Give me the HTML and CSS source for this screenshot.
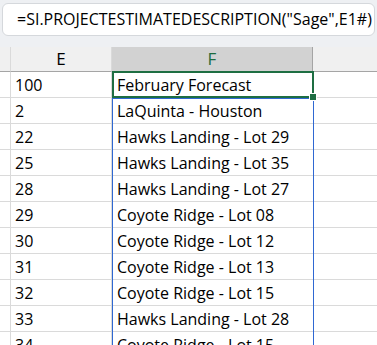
FILE: index.html
```html
<!DOCTYPE html>
<html lang="en">
<head>
  <meta charset="UTF-8" />
  <title>Sheet</title>
  <link rel="stylesheet" href="styles.css">
</head>
<body>
  <div class="formula-bar">
    <div class="formula">=SI.PROJECTESTIMATEDESCRIPTION("Sage",E1#)</div>
  </div>

  <div class="sheet">
    <div class="row head">
      <div class="edge"></div>
      <div class="cell e">E</div>
      <div class="cell f active-col">F</div>
      <div class="cell rest"></div>
    </div>
    <div class="row"><div class="edge"></div><div class="cell e">100</div><div class="cell f">February Forecast</div><div class="cell rest"></div></div>
    <div class="row"><div class="edge"></div><div class="cell e">2</div><div class="cell f">LaQuinta - Houston</div><div class="cell rest"></div></div>
    <div class="row"><div class="edge"></div><div class="cell e">22</div><div class="cell f">Hawks Landing - Lot 29</div><div class="cell rest"></div></div>
    <div class="row"><div class="edge"></div><div class="cell e">25</div><div class="cell f">Hawks Landing - Lot 35</div><div class="cell rest"></div></div>
    <div class="row"><div class="edge"></div><div class="cell e">28</div><div class="cell f">Hawks Landing - Lot 27</div><div class="cell rest"></div></div>
    <div class="row"><div class="edge"></div><div class="cell e">29</div><div class="cell f">Coyote Ridge - Lot 08</div><div class="cell rest"></div></div>
    <div class="row"><div class="edge"></div><div class="cell e">30</div><div class="cell f">Coyote Ridge - Lot 12</div><div class="cell rest"></div></div>
    <div class="row"><div class="edge"></div><div class="cell e">31</div><div class="cell f">Coyote Ridge - Lot 13</div><div class="cell rest"></div></div>
    <div class="row"><div class="edge"></div><div class="cell e">32</div><div class="cell f">Coyote Ridge - Lot 15</div><div class="cell rest"></div></div>
    <div class="row"><div class="edge"></div><div class="cell e">33</div><div class="cell f">Hawks Landing - Lot 28</div><div class="cell rest"></div></div>
    <div class="row"><div class="edge"></div><div class="cell e">34</div><div class="cell f">Coyote Ridge - Lot 15</div><div class="cell rest"></div></div>

    <div class="spill"></div>
    <div class="active"><span class="handle"></span></div>
  </div>
</body>
</html>
```

FILE: styles.css
```css
body { margin: 0; background: #fff; font-family: "Open Sans", "Noto Sans", sans-serif; color: #000; overflow: hidden; }

.formula-bar { background: #eef0f3; height: 47px; padding: 3px 2px 0 2px; box-sizing: border-box; }
.formula { background: #fff; border: 1px solid #d5d8dc; border-radius: 6px; height: 33px; box-sizing: border-box; padding-left: 14px; font-size: 16px; line-height: 31px; white-space: nowrap; overflow: hidden; }

.sheet { position: relative; }
.row { display: grid; grid-template-columns: 11px 101px 201px 1fr; height: 26px; }
.cell, .edge { border-bottom: 1px solid #dadada; box-sizing: border-box; font-size: 16px; line-height: 26px; white-space: nowrap; overflow: hidden; }
.edge { border-right: 1px solid #dadada; }
.cell.e { border-right: 1px solid #dadada; padding-left: 4px; }
.cell.f { padding-left: 5px; }

.head { height: 25px; }
.head .cell, .head .edge { background: #f0f0f0; border-bottom: 1px solid #a5a5a5; line-height: 24px; font-size: 17px; }
.head .cell.e { text-align: center; padding-left: 0; }
.head .cell.f { text-align: center; padding-left: 0; border-right: 1px solid #a5a5a5; }
.head .active-col { background: #d2d2d2 !important; color: #1d6b3e; }
.head .cell.rest { border-left: none; }

.spill { position: absolute; left: 112px; top: 51px; width: 202px; height: 300px; border: 1px solid #2f68d2; box-sizing: border-box; }
.active { position: absolute; left: 112px; top: 24px; width: 202px; height: 27px; border: 2px solid #1e6e42; box-sizing: border-box; }
.handle { position: absolute; right: -5px; bottom: -5px; width: 6px; height: 6px; background: #1e6e42; border: 1px solid #fff; }
```
